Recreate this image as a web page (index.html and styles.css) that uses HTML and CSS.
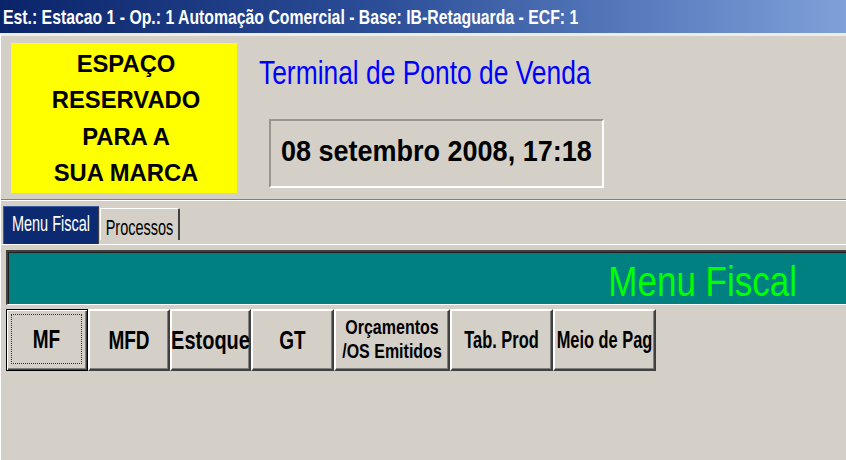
FILE: index.html
```html
<!DOCTYPE html>
<html lang="pt-BR">
<head>
<meta charset="utf-8">
<title>Terminal de Ponto de Venda</title>
<link rel="stylesheet" href="styles.css">
</head>
<body>
<div class="window">
  <div class="titlebar"><span class="title-text">Est.: Estacao 1 - Op.: 1 Automação Comercial - Base: IB-Retaguarda - ECF: 1</span></div>
  <div class="client">
    <header class="header">
      <div class="brand">
        <span>ESPAÇO</span>
        <span>RESERVADO</span>
        <span>PARA A</span>
        <span>SUA MARCA</span>
      </div>
      <div class="info">
        <div class="app-name"><span class="app-name-text">Terminal de Ponto de Venda</span></div>
        <div class="clock"><span class="clock-text">08 setembro 2008, 17:18</span></div>
      </div>
    </header>
    <nav class="tabs">
      <div class="tab tab-active"><span class="tab-label">Menu Fiscal</span></div>
      <div class="tab tab-idle"><span class="tab-label">Processos</span></div>
    </nav>
    <section class="page">
      <div class="banner"><span class="banner-text">Menu Fiscal</span></div>
      <div class="buttons">
        <button class="btn btn-default w-mf"><span class="focus"><span class="lbl">MF</span></span></button>
        <button class="btn w-mfd"><span class="lbl">MFD</span></button>
        <button class="btn w-est"><span class="lbl lbl-est">Estoque</span></button>
        <button class="btn w-gt"><span class="lbl">GT</span></button>
        <button class="btn w-orc"><span class="lbl lbl-orc">Orçamentos<br>/OS Emitidos</span></button>
        <button class="btn w-tab"><span class="lbl lbl-sm">Tab. Prod</span></button>
        <button class="btn w-pag"><span class="lbl lbl-sm">Meio de Pag</span></button>
      </div>
    </section>
  </div>
</div>
</body>
</html>
```
FILE: styles.css
```css
* { box-sizing: border-box; }
html, body { margin: 0; padding: 0; }
body {
  width: 846px;
  height: 460px;
  overflow: hidden;
  background: #d4d0c8;
  font-family: "Liberation Sans", Arial, sans-serif;
}
.window { width: 846px; height: 460px; }

/* Title bar */
.titlebar {
  height: 33px;
  background: linear-gradient(to right, #0a246a 0%, #2c4e98 45%, #5f82c3 80%, #7fa0d8 100%);
  color: #fff;
  display: flex;
  align-items: center;
  padding-left: 3px;
}
.title-text {
  display: inline-block;
  font-weight: bold;
  font-size: 15.8px;
  white-space: nowrap;
  transform: scaleY(1.3);
  transform-origin: left center;
}

.client {
  border-top: 3px solid #eeece6;
  border-left: 1px solid #fff;
  height: 427px;
}

/* Header */
.header {
  height: 164px;
  display: flex;
  padding: 7px 0 0 10px;
  border-bottom: 1px solid #808080;
}
.brand {
  width: 226px;
  height: 150px;
  background: #ffff00;
  display: flex;
  flex-direction: column;
  align-items: center;
  padding-top: 3px;
  padding-left: 4px;
  font-weight: bold;
  font-size: 23.8px;
  line-height: 36.3px;
  color: #000;
}
.info {
  margin-left: 22px;
  display: flex;
  flex-direction: column;
}
.app-name {
  margin-top: 15px;
  height: 30px;
  line-height: 30px;
  color: #0000ff;
  font-size: 26.4px;
}
.app-name-text {
  display: inline-block;
  transform: scaleY(1.24);
  transform-origin: left center;
}
.clock {
  margin-top: 31px;
  margin-left: 10px;
  width: 335px;
  height: 69px;
  border: 2px solid;
  border-color: #9a968e #fff #fff #9a968e;
  display: flex;
  align-items: center;
  padding: 0 0 5px 10px;
}
.clock-text {
  display: inline-block;
  font-weight: bold;
  font-size: 27px;
  white-space: nowrap;
  transform: scaleY(1.1);
  transform-origin: left center;
}

/* Tabs */
.tabs {
  height: 44px;
  border-top: 1px solid #fff;
  display: flex;
  align-items: flex-start;
  padding-left: 2px;
}
.tab {
  display: flex;
  justify-content: center;
  font-size: 14.5px;
}
.tab-label {
  display: inline-block;
  transform: scaleY(1.5);
  transform-origin: center top;
  white-space: nowrap;
}
.tab-active {
  margin-top: 5px;
  width: 96px;
  height: 38px;
  background: #0b2a72;
  color: #fff;
  border-top: 1px solid #3b5aa0;
  border-left: 1px solid #3b5aa0;
  border-right: 1px solid #404040;
  padding-top: 4px;
}
.tab-idle {
  margin-top: 7px;
  margin-left: 1px;
  width: 80px;
  height: 32px;
  color: #000;
  border-top: 1px solid #fff;
  border-left: 1px solid #fff;
  border-right: 2px solid #404040;
  border-top-right-radius: 2px;
  padding-top: 6px;
}

/* Page */
.page {
  border-top: 1px solid #fff;
  padding: 5px 0 0 5px;
}
.banner {
  height: 55px;
  background: #008080;
  border-style: solid;
  border-width: 2px 0 1px 2px;
  border-color: #404040 #fff #fff #404040;
  box-shadow: inset 1px 1px 0 #202020;
  display: flex;
  align-items: center;
  justify-content: flex-end;
  padding: 5px 49px 0 0;
}
.banner-text {
  display: inline-block;
  color: #00ff00;
  font-size: 35px;
  transform: scaleY(1.22);
  white-space: nowrap;
}

/* Buttons */
.buttons {
  display: flex;
  margin-top: 4px;
}
.btn {
  height: 62px;
  margin: 0;
  padding: 0;
  background: #d4d0c8;
  border: 2px solid;
  border-color: #fff #404040 #404040 #fff;
  box-shadow: inset -1px -1px 0 #808080;
  display: flex;
  align-items: center;
  justify-content: center;
  font-family: "Liberation Sans", Arial, sans-serif;
  font-weight: bold;
  font-size: 19px;
  color: #000;
  line-height: 1;
}
.btn-default {
  border: 1px solid #000;
  box-shadow: inset 1px 1px 0 #fff, inset -1px -1px 0 #404040, inset -2px -2px 0 #808080;
  padding: 4px 5px 6px 4px;
}
.focus {
  flex: 1;
  align-self: stretch;
  border: 1px dotted #303030;
  display: flex;
  align-items: center;
  justify-content: center;
}
.lbl {
  display: inline-block;
  white-space: nowrap;
  transform: scaleY(1.32);
}
.lbl-est { font-size: 20px; }
.lbl-sm { font-size: 16.4px; transform: scaleY(1.42); }
.lbl-orc {
  font-size: 16px;
  line-height: 20px;
  transform: scaleY(1.22);
  text-align: center;
}
.w-mf { width: 82px; }
.w-mfd { width: 82px; }
.w-est { width: 81px; }
.w-gt { width: 83px; }
.w-orc { width: 116px; }
.w-tab { width: 103px; }
.w-pag { width: 103px; }
```
